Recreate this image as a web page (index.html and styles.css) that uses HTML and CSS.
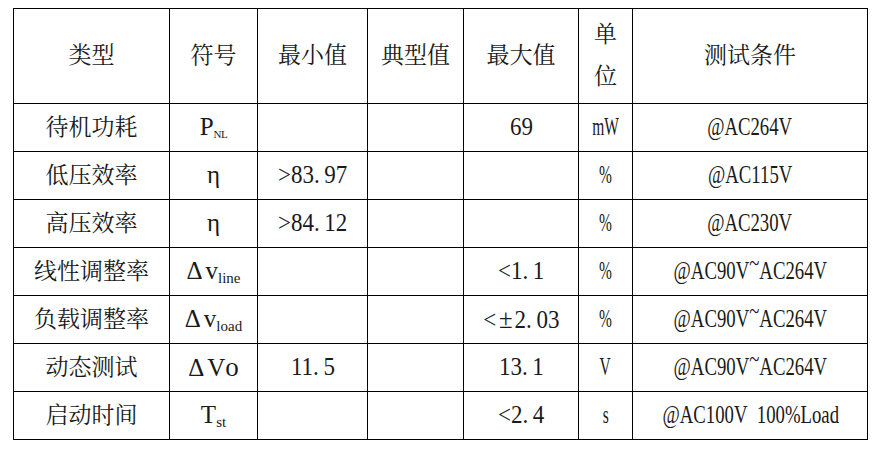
FILE: index.html
```html
<!DOCTYPE html>
<html lang="zh-CN">
<head>
<meta charset="utf-8">
<title>参数表</title>
<link rel="stylesheet" href="styles.css">
</head>
<body>
<table class="spec">
  <colgroup>
    <col class="c-type">
    <col class="c-sym">
    <col class="c-min">
    <col class="c-typ">
    <col class="c-max">
    <col class="c-unit">
    <col class="c-cond">
  </colgroup>
  <thead>
    <tr class="head">
      <th>类型</th>
      <th>符号</th>
      <th>最小值</th>
      <th>典型值</th>
      <th>最大值</th>
      <th class="unit-head">单<br>位</th>
      <th>测试条件</th>
    </tr>
  </thead>
  <tbody>
    <tr>
      <td>待机功耗</td>
      <td><span class="sym">P<sub class="sc">NL</sub></span></td>
      <td></td>
      <td></td>
      <td><span class="nar n">69</span></td>
      <td><span class="nar u">mW</span></td>
      <td><span class="nar c">@AC264V</span></td>
    </tr>
    <tr>
      <td>低压效率</td>
      <td><span class="sym">η</span></td>
      <td><span class="nar n">&gt;83.<span class="gap"></span>97</span></td>
      <td></td>
      <td></td>
      <td><span class="nar u">%</span></td>
      <td><span class="nar c">@AC115V</span></td>
    </tr>
    <tr>
      <td>高压效率</td>
      <td><span class="sym">η</span></td>
      <td><span class="nar n">&gt;84.<span class="gap"></span>12</span></td>
      <td></td>
      <td></td>
      <td><span class="nar u">%</span></td>
      <td><span class="nar c">@AC230V</span></td>
    </tr>
    <tr>
      <td>线性调整率</td>
      <td><span class="sym"><span class="delta">Δ</span>v<sub>line</sub></span></td>
      <td></td>
      <td></td>
      <td><span class="nar n">&lt;1.<span class="gap"></span>1</span></td>
      <td><span class="nar u">%</span></td>
      <td><span class="nar c">@AC90V<span class="tilde">~</span>AC264V</span></td>
    </tr>
    <tr>
      <td>负载调整率</td>
      <td><span class="sym"><span class="delta">Δ</span>v<sub>load</sub></span></td>
      <td></td>
      <td></td>
      <td><span class="nar n">&lt;<span class="pm">±</span>2.<span class="gap"></span>03</span></td>
      <td><span class="nar u">%</span></td>
      <td><span class="nar c">@AC90V<span class="tilde">~</span>AC264V</span></td>
    </tr>
    <tr>
      <td>动态测试</td>
      <td><span class="sym"><span class="delta">Δ</span>V<span class="o">o</span></span></td>
      <td><span class="nar n">11.<span class="gap"></span>5</span></td>
      <td></td>
      <td><span class="nar n">13.<span class="gap"></span>1</span></td>
      <td><span class="nar u">V</span></td>
      <td><span class="nar c">@AC90V<span class="tilde">~</span>AC264V</span></td>
    </tr>
    <tr>
      <td>启动时间</td>
      <td><span class="sym">T<sub>st</sub></span></td>
      <td></td>
      <td></td>
      <td><span class="nar n">&lt;2.<span class="gap"></span>4</span></td>
      <td><span class="nar u">s</span></td>
      <td><span class="nar c">@AC100V&nbsp;&nbsp;100%Load</span></td>
    </tr>
  </tbody>
</table>
</body>
</html>
```

FILE: styles.css
```css
html, body {
  margin: 0;
  padding: 0;
  background: #ffffff;
}

body {
  font-family: "Liberation Serif", "Noto Serif CJK SC", "Noto Sans CJK SC", serif;
  color: #1a1a1a;
}

.spec {
  margin: 8px 0 0 13px;
  border-collapse: collapse;
  table-layout: fixed;
  width: 854px;
  font-size: 23px;
}

.c-type { width: 156px; }
.c-sym  { width: 88px; }
.c-min  { width: 110px; }
.c-typ  { width: 96px; }
.c-max  { width: 115px; }
.c-unit { width: 54px; }
.c-cond { width: 235px; }

.spec th,
.spec td {
  border: 1px solid #000;
  padding: 0;
  text-align: center;
  vertical-align: middle;
  font-weight: normal;
  white-space: nowrap;
  line-height: 26px;
}

.head th {
  height: 94px;
}

.spec .unit-head {
  line-height: 42px;
}

.spec tbody td {
  height: 47px;
}

.sym,
.nar {
  font-size: 25px;
}

.gap {
  display: inline-block;
  width: 5px;
}

.pm {
  display: inline-block;
  margin: 0 2px 0 3px;
  font-size: 27px;
}

.sym sub {
  font-size: 15px;
  vertical-align: -4px;
  line-height: 0;
}

.sym .sc {
  font-size: 11px;
  letter-spacing: -0.5px;
  vertical-align: -3px;
}

.delta {
  display: inline-block;
  width: 19px;
  text-align: left;
}

.o {
  font-size: 27px;
}

.tilde {
  display: inline-block;
  vertical-align: 8px;
  line-height: 0;
}

.nar {
  display: inline-block;
  transform-origin: center;
}

.nar.n {
  transform: scaleX(0.92);
}

.nar.c {
  transform: scaleX(0.75);
}

.nar.u {
  transform: scaleX(0.62);
}
```
